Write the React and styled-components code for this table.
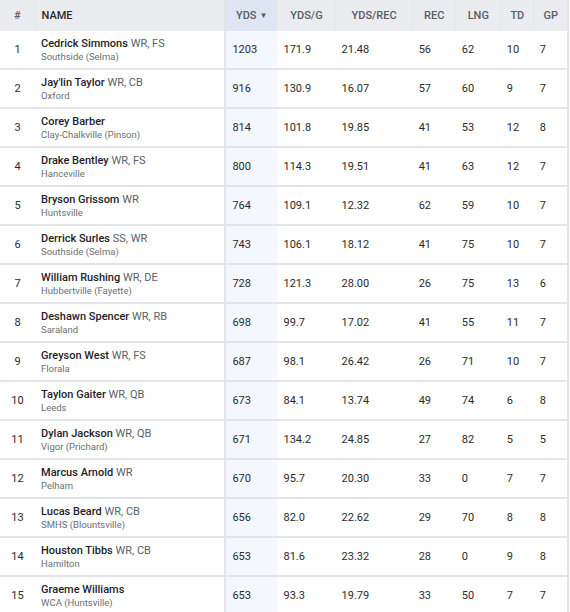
import React from "react";
import styled, { createGlobalStyle } from "styled-components";

const GlobalStyle = createGlobalStyle`
  body {
    margin: 0;
    background: #fff;
    font-family: Roboto, "Liberation Sans", sans-serif;
    color: #2b2b2b;
  }
`;

const players = [
  ["Cedrick Simmons", "WR, FS", "Southside (Selma)", 1203, "171.9", "21.48", 56, 62, 10, 7],
  ["Jay'lin Taylor", "WR, CB", "Oxford", 916, "130.9", "16.07", 57, 60, 9, 7],
  ["Corey Barber", "", "Clay-Chalkville (Pinson)", 814, "101.8", "19.85", 41, 53, 12, 8],
  ["Drake Bentley", "WR, FS", "Hanceville", 800, "114.3", "19.51", 41, 63, 12, 7],
  ["Bryson Grissom", "WR", "Huntsville", 764, "109.1", "12.32", 62, 59, 10, 7],
  ["Derrick Surles", "SS, WR", "Southside (Selma)", 743, "106.1", "18.12", 41, 75, 10, 7],
  ["William Rushing", "WR, DE", "Hubbertville (Fayette)", 728, "121.3", "28.00", 26, 75, 13, 6],
  ["Deshawn Spencer", "WR, RB", "Saraland", 698, "99.7", "17.02", 41, 55, 11, 7],
  ["Greyson West", "WR, FS", "Florala", 687, "98.1", "26.42", 26, 71, 10, 7],
  ["Taylon Gaiter", "WR, QB", "Leeds", 673, "84.1", "13.74", 49, 74, 6, 8],
  ["Dylan Jackson", "WR, QB", "Vigor (Prichard)", 671, "134.2", "24.85", 27, 82, 5, 5],
  ["Marcus Arnold", "WR", "Pelham", 670, "95.7", "20.30", 33, 0, 7, 7],
  ["Lucas Beard", "WR, CB", "SMHS (Blountsville)", 656, "82.0", "22.62", 29, 70, 8, 8],
  ["Houston Tibbs", "WR, CB", "Hamilton", 653, "81.6", "23.32", 28, 0, 9, 8],
  ["Graeme Williams", "", "WCA (Huntsville)", 653, "93.3", "19.79", 33, 50, 7, 7],
];

const columns = [
  { key: "rank", label: "#", width: 35, align: "center" },
  { key: "name", label: "NAME", width: 190, align: "left" },
  { key: "yds", label: "YDS", width: 52, sorted: true },
  { key: "ydsg", label: "YDS/G", width: 58 },
  { key: "ydsrec", label: "YDS/REC", width: 77 },
  { key: "rec", label: "REC", width: 43 },
  { key: "lng", label: "LNG", width: 45 },
  { key: "td", label: "TD", width: 33 },
  { key: "gp", label: "GP", width: 34 },
];

const Wrapper = styled.div`
  width: 570px;
  overflow: hidden;
`;

const Table = styled.table`
  width: 569px;
  border-collapse: collapse;
  table-layout: fixed;
  border-right: 2px solid #e4e5e8;
`;

const HeadCell = styled.th`
  height: 31px;
  padding: 0 4px;
  background: ${(p) => (p.$sorted ? "#dfe5f2" : "#ebecef")};
  border-left: ${(p) => (p.$divider ? "2px solid #e1e3e7" : "1px solid #e4e6e9")};
  color: ${(p) => (p.$dark ? "#2b2b2b" : "#575c66")};
  font-size: 11px;
  font-weight: 500;
  text-align: ${(p) => p.$align || "center"};
  padding-left: ${(p) => (p.$align === "left" ? "6px" : "4px")};
  white-space: nowrap;
  &:first-child {
    border-left: none;
  }
`;

const Arrow = styled.span`
  font-size: 8px;
  margin-left: 3px;
  position: relative;
  top: -1px;
`;

const Row = styled.tr`
  border-bottom: 2px solid #e4e5e8;
`;

const Cell = styled.td`
  height: 37px;
  padding: 0 6px;
  font-size: 11px;
  color: #2b2b2b;
  text-align: ${(p) => p.$align || "left"};
  background: ${(p) => (p.$sorted ? "#f4f7fd" : "#fff")};
  border-left: ${(p) => (p.$divider ? "2px solid #e4e5e8" : "none")};
  vertical-align: middle;
  white-space: nowrap;
`;

const Name = styled.div`
  font-size: 11px;
  font-weight: 500;
  color: #1f2329;
  line-height: 14px;
`;

const Position = styled.span`
  font-weight: 400;
  color: #5b5f66;
`;

const School = styled.div`
  font-size: 9.5px;
  color: #6b6f76;
  line-height: 12px;
`;

export default function App() {
  return (
    <Wrapper>
      <GlobalStyle />
      <Table>
        <colgroup>
          {columns.map((c) => (
            <col key={c.key} style={{ width: c.width }} />
          ))}
        </colgroup>
        <thead>
          <tr>
            {columns.map((c) => (
              <HeadCell
                key={c.key}
                $align={c.align}
                $sorted={c.sorted}
                $divider={c.key === "yds"}
                $dark={c.key === "name"}
              >
                {c.label}
                {c.sorted && <Arrow>▼</Arrow>}
              </HeadCell>
            ))}
          </tr>
        </thead>
        <tbody>
          {players.map((p, i) => {
            const [name, pos, school, yds, ydsg, ydsrec, rec, lng, td, gp] = p;
            return (
              <Row key={name}>
                <Cell $align="center">{i + 1}</Cell>
                <Cell>
                  <Name>
                    {name} {pos && <Position>{pos}</Position>}
                  </Name>
                  <School>{school}</School>
                </Cell>
                <Cell $sorted $divider>{yds}</Cell>
                <Cell>{ydsg}</Cell>
                <Cell>{ydsrec}</Cell>
                <Cell>{rec}</Cell>
                <Cell>{lng}</Cell>
                <Cell>{td}</Cell>
                <Cell>{gp}</Cell>
              </Row>
            );
          })}
        </tbody>
      </Table>
    </Wrapper>
  );
}
